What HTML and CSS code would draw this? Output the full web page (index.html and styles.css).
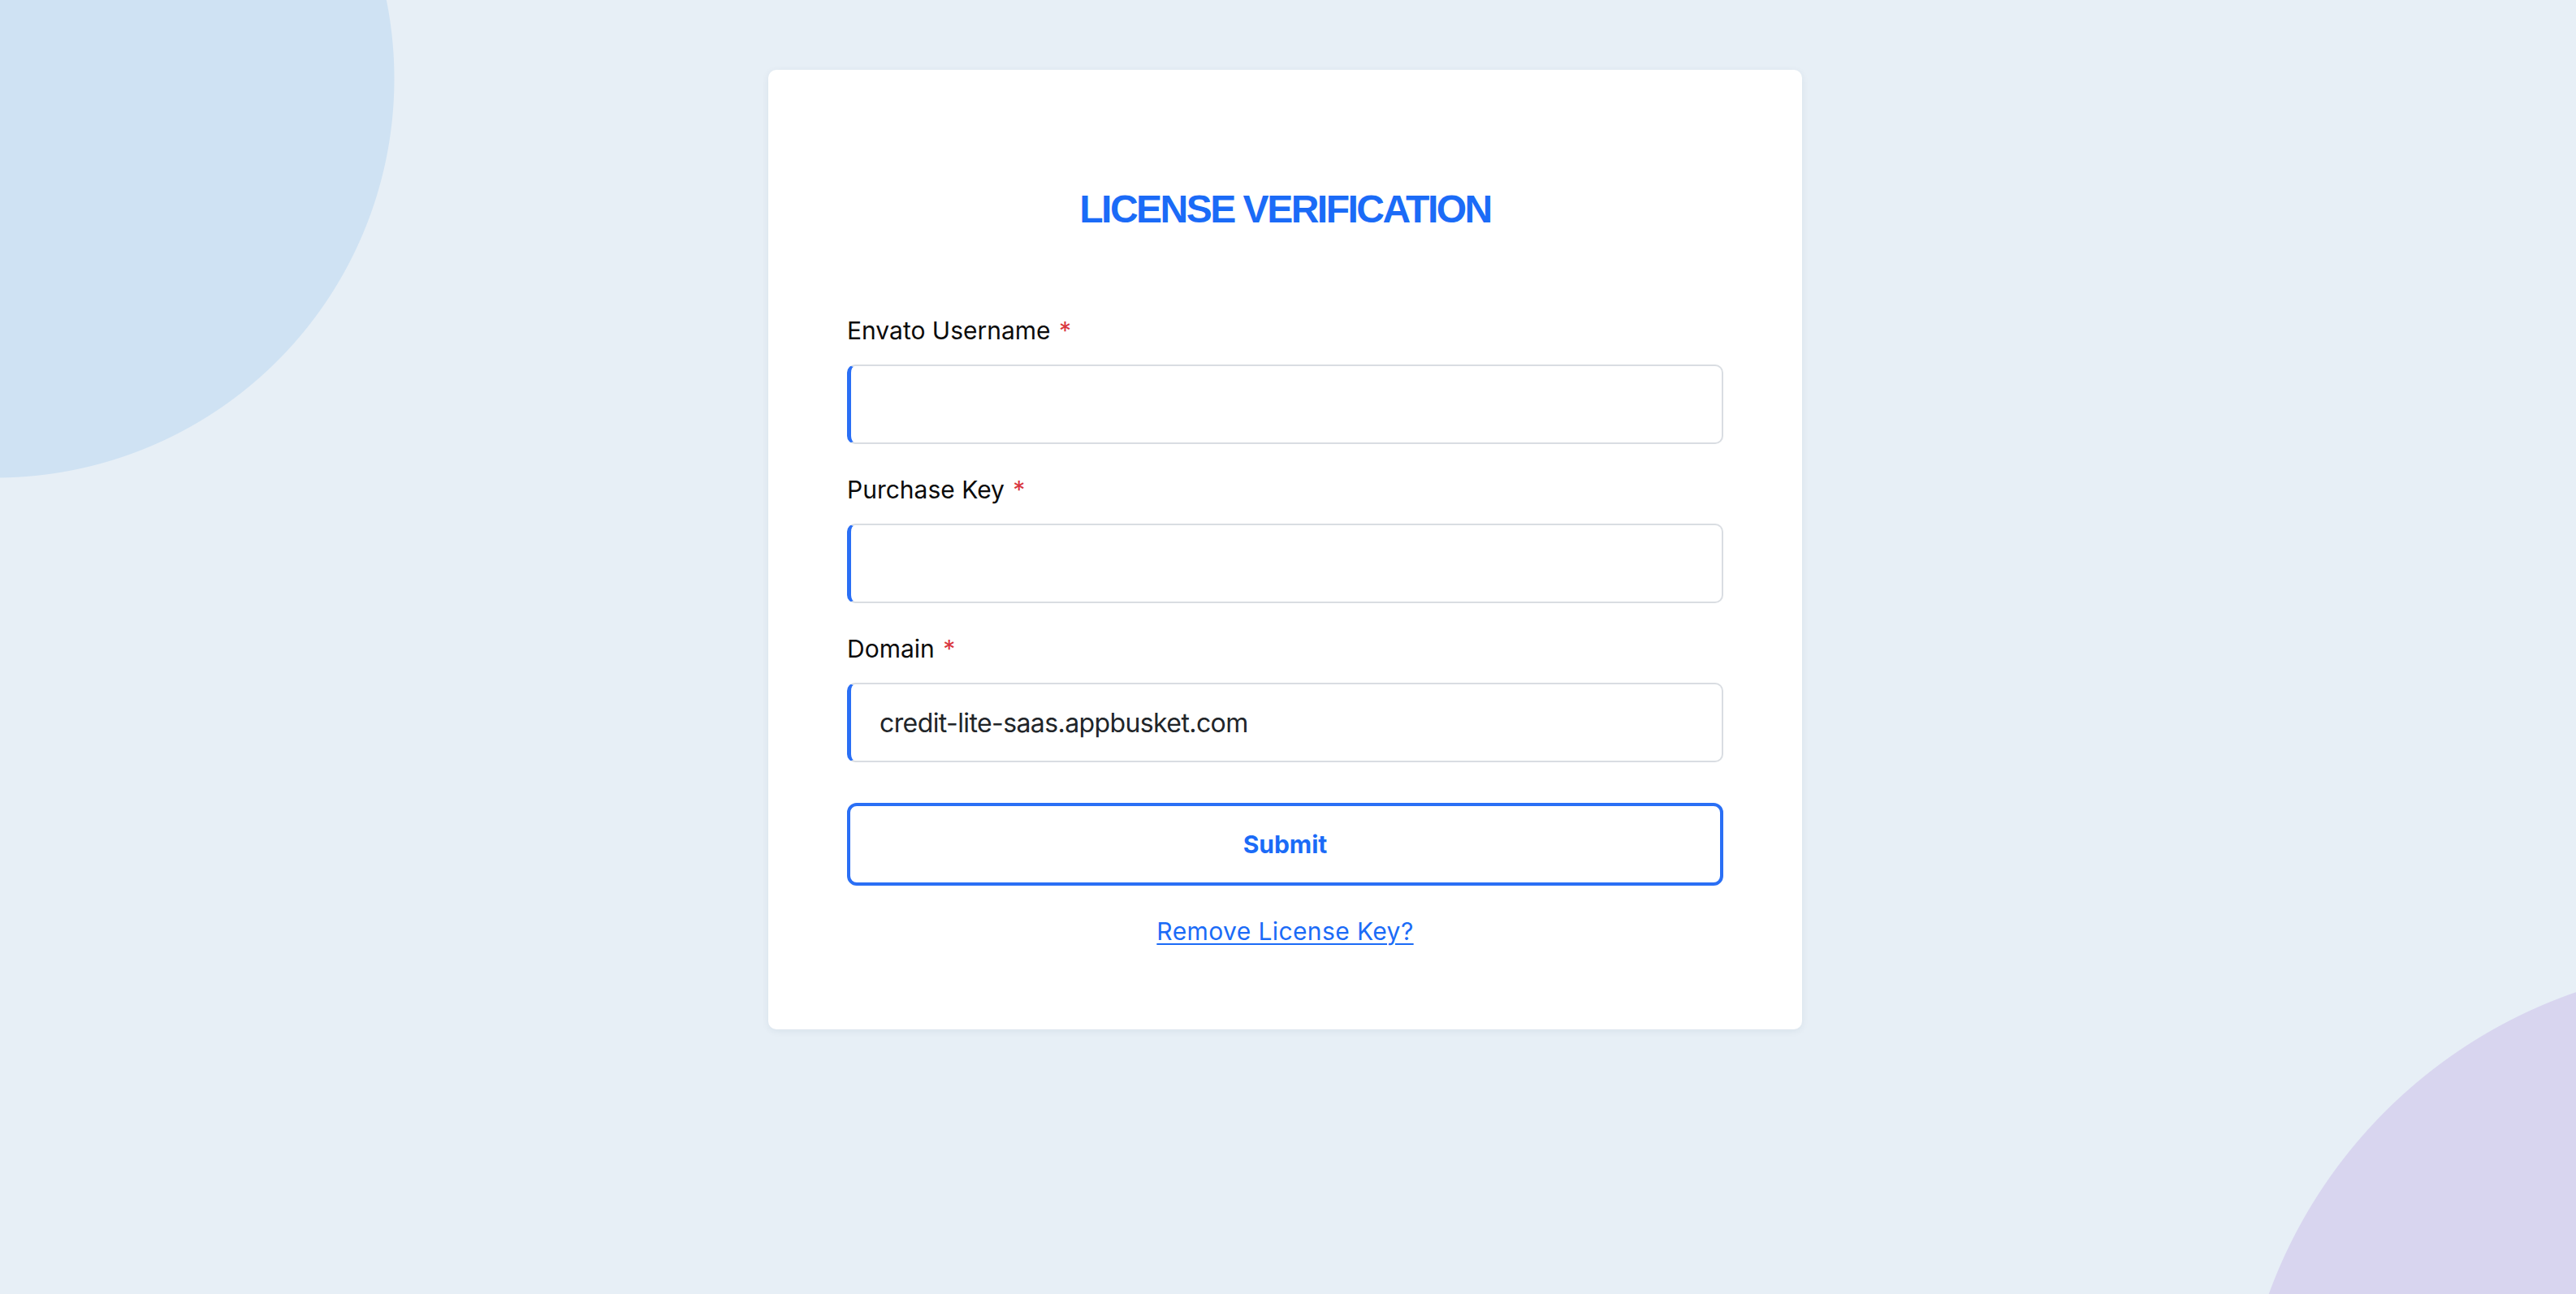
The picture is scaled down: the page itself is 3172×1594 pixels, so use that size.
FILE: index.html
```html
<!DOCTYPE html>
<html lang="en">
<head>
<meta charset="utf-8">
<title>License Verification</title>
<link rel="stylesheet" href="styles.css">
</head>
<body>
<main class="card">
  <h1 class="title">LICENSE VERIFICATION</h1>
  <form class="form">
    <div class="field">
      <label class="label" for="username">Envato Username <span class="req">*</span></label>
      <input class="input" id="username" type="text">
    </div>
    <div class="field">
      <label class="label" for="key">Purchase Key <span class="req">*</span></label>
      <input class="input" id="key" type="text">
    </div>
    <div class="field field-last">
      <label class="label" for="domain">Domain <span class="req">*</span></label>
      <input class="input" id="domain" type="text" value="credit-lite-saas.appbusket.com">
    </div>
    <button class="submit" type="button">Submit</button>
    <div class="remove"><a href="#" class="remove-link">Remove License Key?</a></div>
  </form>
</main>
</body>
</html>
```

FILE: styles.css
```css
html, body {
  margin: 0;
  padding: 0;
}

body {
  box-sizing: border-box;
  height: 1594px;
  overflow: hidden;
  padding: 86px 7px 0 0;
  font-family: Inter, "Noto Sans", sans-serif;
  color: #000;
  background:
    radial-gradient(circle 492px at -6px 97px, #cfe2f3 491px, rgba(207, 226, 243, 0) 492px),
    radial-gradient(circle 617px at 3373px 1805px, #d8d5ef 616px, rgba(216, 213, 239, 0) 617px),
    #e7eff6;
}

.card {
  box-sizing: border-box;
  width: 1273px;
  margin: 0 auto;
  padding: 143px 97px 103px;
  background: #fff;
  border-radius: 10px;
  box-shadow: 0 2px 10px rgba(30, 50, 80, 0.07);
}

.title {
  margin: 0 0 102px;
  font-family: "Liberation Sans", Arial, sans-serif;
  font-weight: 700;
  font-size: 48px;
  line-height: 58px;
  letter-spacing: -2.5px;
  text-align: center;
  color: #1b6bf7;
}

.form {
  display: flex;
  flex-direction: column;
}

.field {
  display: flex;
  flex-direction: column;
  margin-bottom: 38px;
}

.field-last {
  margin-bottom: 50px;
}

.label {
  display: block;
  font-size: 30px;
  line-height: 36px;
  margin-bottom: 24px;
  color: #0b0b0b;
}

.req {
  color: #d9363e;
  margin-left: 2px;
}

.input {
  box-sizing: border-box;
  height: 98px;
  width: 100%;
  border: 2px solid #d9dde2;
  border-left: 5px solid #2a6ff5;
  border-radius: 10px;
  padding: 0 35px;
  font-family: Inter, "Noto Sans", sans-serif;
  font-size: 32px;
  letter-spacing: -0.6px;
  color: #212529;
  background: #fff;
  outline: none;
}

.submit {
  box-sizing: border-box;
  height: 102px;
  width: 100%;
  border: 4px solid #2a6ff5;
  border-radius: 12px;
  background: #fff;
  color: #1b6bf7;
  font-family: Inter, "Noto Sans", sans-serif;
  font-weight: 700;
  font-size: 30px;
  cursor: pointer;
}

.remove {
  margin-top: 38px;
  text-align: center;
  line-height: 36px;
  font-size: 30px;
}

.remove-link {
  color: #1b6bf7;
  letter-spacing: 0.4px;
  text-decoration: underline;
  text-underline-offset: 4px;
  text-decoration-thickness: 2px;
}
```
